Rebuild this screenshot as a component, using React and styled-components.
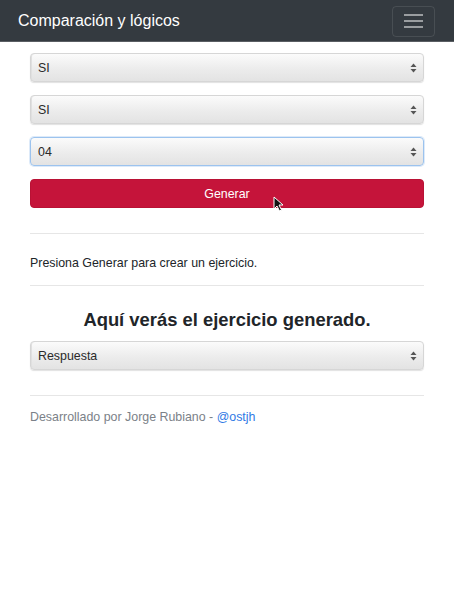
import * as React from "react";
import styled, { createGlobalStyle } from "styled-components";

const GlobalStyle = createGlobalStyle`
  body {
    margin: 0;
    background: #fff;
    font-family: "Liberation Sans", Arial, sans-serif;
    color: #212529;
  }
`;

const App = () => {
  return (
    <Page>
      <GlobalStyle />
      <Navbar>
        <Brand>Comparación y lógicos</Brand>
        <Toggler aria-label="menu">
          <TogglerLine />
          <TogglerLine />
          <TogglerLine />
        </Toggler>
      </Navbar>
      <Container>
        <Form>
          <Select value="SI" />
          <Select value="SI" />
          <Select value="04" focused />
          <ButtonWrap>
            <Button>Generar</Button>
            <Cursor />
          </ButtonWrap>
        </Form>
        <Divider $top={25} />
        <Hint>Presiona Generar para crear un ejercicio.</Hint>
        <Divider $top={11} />
        <Heading>Aquí verás el ejercicio generado.</Heading>
        <Select value="Respuesta" />
        <Divider $top={25} />
        <Footer>
          Desarrollado por Jorge Rubiano - <FooterLink href="#">@ostjh</FooterLink>
        </Footer>
      </Container>
    </Page>
  );
};

export default App;

const Page = styled.div`
  min-height: 592px;
`;

const Navbar = styled.nav`
  height: 42px;
  background: #343a40;
  display: flex;
  align-items: center;
  justify-content: space-between;
  padding: 0 19px 0 18px;
  box-sizing: border-box;
  border-bottom: 1px solid #5a5e63;
`;

const Brand = styled.span`
  color: #fff;
  font-size: 16px;
`;

const Toggler = styled.button`
  width: 43px;
  height: 31px;
  border: 1px solid rgba(255, 255, 255, 0.1);
  border-radius: 4px;
  background: transparent;
  display: flex;
  flex-direction: column;
  align-items: center;
  justify-content: center;
  gap: 4px;
  padding: 0;
  margin-top: 1px;
`;

const TogglerLine = styled.span`
  display: block;
  width: 19px;
  height: 2px;
  background: rgba(255, 255, 255, 0.5);
`;

const Container = styled.main`
  padding: 11px 30px 0;
`;

const Form = styled.div`
  display: flex;
  flex-direction: column;
  gap: 13px;
`;

const SelectBox = styled.div`
  position: relative;
  height: 29px;
  box-sizing: border-box;
  border: 1px solid ${(p) => (p.$focused ? "#9cc3ee" : "#d6d6d6")};
  border-radius: 4px;
  background: linear-gradient(#fbfbfb, #ececec 55%, #e3e3e3);
  box-shadow: ${(p) =>
    p.$focused
      ? "0 0 0 1px rgba(120, 170, 230, 0.25)"
      : "0 1px 1px rgba(0, 0, 0, 0.12), inset 1px 0 0 #e0e0e0"};
  display: flex;
  align-items: center;
  padding: 0 24px 0 7px;
  font-size: 12.4px;
  color: #2a2a2a;
`;

const Arrows = styled.svg`
  position: absolute;
  right: 6px;
  top: 50%;
  margin-top: -5px;
`;

const Select = ({ value, focused }) => (
  <SelectBox $focused={focused}>
    {value}
    <Arrows width="7" height="10" viewBox="0 0 7 10">
      <path d="M3.5 0.5 L6.5 4 L0.5 4 Z" fill="#555" />
      <path d="M3.5 9.5 L6.5 6 L0.5 6 Z" fill="#555" />
    </Arrows>
  </SelectBox>
);

const ButtonWrap = styled.div`
  position: relative;
`;

const Button = styled.button`
  width: 100%;
  height: 29px;
  border: 1px solid #b91235;
  border-radius: 4px;
  background: #c5143a;
  color: #fff;
  font-family: "Liberation Sans", Arial, sans-serif;
  font-size: 12.4px;
  padding: 0;
`;

const CursorSvg = styled.svg`
  position: absolute;
  left: 243px;
  top: 17px;
`;

const Cursor = () => (
  <CursorSvg width="12" height="16" viewBox="0 0 12 16">
    <path
      d="M1 1 L1 13 L4 10 L6.5 15 L8.5 14 L6 9 L10 9 Z"
      fill="#111"
      stroke="#fff"
      strokeWidth="1"
    />
  </CursorSvg>
);

const Divider = styled.hr`
  margin: ${(p) => p.$top}px 0 0;
  border: 0;
  border-top: 1px solid #e6e6e6;
`;

const Hint = styled.p`
  margin: 19px 0 0;
  font-size: 12.4px;
  line-height: 21px;
  color: #212529;
`;

const Heading = styled.h2`
  margin: 22px 0 9px;
  text-align: center;
  font-size: 18.4px;
  line-height: 24px;
  font-weight: 700;
  color: #212529;
`;

const Footer = styled.p`
  margin: 11px 0 0;
  font-size: 12.4px;
  line-height: 21px;
  color: #7b8188;
`;

const FooterLink = styled.a`
  color: #2f7ae5;
  text-decoration: none;
`;
